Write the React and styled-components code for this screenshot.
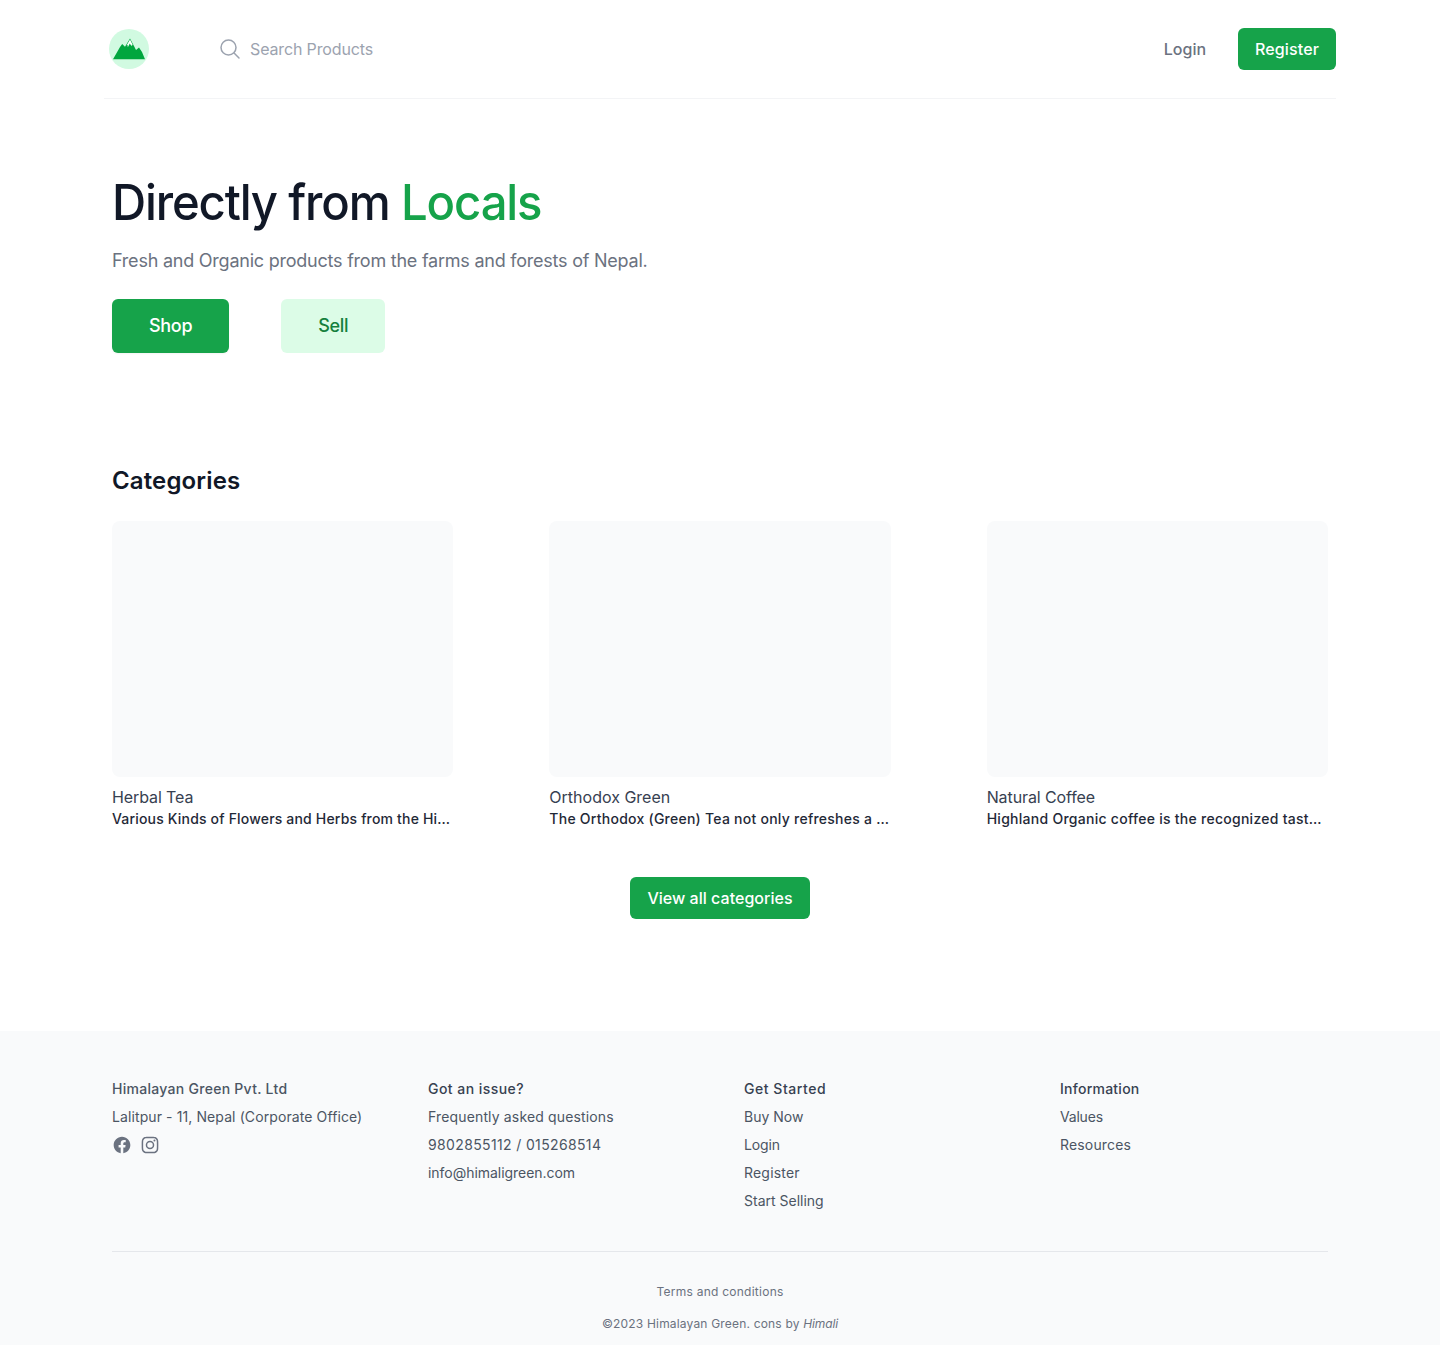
import React from "react";
import styled, { createGlobalStyle } from "styled-components";

const GlobalStyle = createGlobalStyle`
  *, *::before, *::after { box-sizing: border-box; }
  body {
    margin: 0;
    background: #fff;
    color: #111827;
    font-family: Inter, "Liberation Sans", sans-serif;
    font-size: 16px;
    line-height: 24px;
  }
  h1, h2, h3, p, ul { margin: 0; padding: 0; font-weight: inherit; font-size: inherit; }
  ul { list-style: none; }
  a { color: inherit; text-decoration: none; }
`;

const Page = styled.div`
  min-height: 1345px;
  display: flex;
  flex-direction: column;
`;

const Header = styled.header`
  width: 1232px;
  height: 99px;
  margin: 0 auto;
  display: flex;
  align-items: center;
  border-bottom: 1px solid #f3f4f6;
`;

const LogoLink = styled.a`
  display: flex;
  margin-left: 5px;
`;

const Search = styled.label`
  display: flex;
  flex: 1;
  align-items: center;
  gap: 8px;
  margin-left: 69px;
  color: #9ca3af;
`;

const SearchInput = styled.input`
  width: 320px;
  padding: 0;
  border: 0;
  outline: 0;
  background: transparent;
  font: inherit;
  letter-spacing: -0.14px;
  &::placeholder { color: #9ca3af; opacity: 1; }
`;

const LoginLink = styled.a`
  margin-right: 32px;
  font-weight: 500;
  color: #6b7280;
`;

const Button = styled.a`
  display: inline-flex;
  align-items: center;
  justify-content: center;
  height: ${(p) => (p.$large ? "54px" : "42px")};
  padding: 0 ${(p) => (p.$large ? "37px" : "17px")};
  border-radius: 6px;
  font-size: ${(p) => (p.$large ? "18px" : "16px")};
  font-weight: 500;
  letter-spacing: ${(p) => p.$track || 0}px;
  white-space: nowrap;
  color: ${(p) => (p.$soft ? "#15803d" : "#fff")};
  background: ${(p) => (p.$soft ? "#dcfce7" : "#16a34a")};
  box-shadow: ${(p) => (p.$raised ? "0 1px 2px rgba(0, 0, 0, 0.05)" : "none")};
`;

const Main = styled.main`
  width: 1216px;
  margin: 0 auto;
`;

const Hero = styled.section`
  padding-top: 80px;
`;

const Headline = styled.h1`
  font-size: 49.5px;
  line-height: 46px;
  font-weight: 500;
  letter-spacing: -1.2px;
  transform: scaleX(0.955);
  transform-origin: left;
`;

const Accent = styled.span`
  color: #16a34a;
`;

const Lead = styled.p`
  margin-top: 22px;
  font-size: 18px;
  line-height: 28px;
  letter-spacing: -0.23px;
  color: #6b7280;
`;

const Actions = styled.div`
  display: flex;
  gap: 52px;
  margin-top: 24px;
`;

const Categories = styled.section`
  margin-top: 112px;
`;

const SectionTitle = styled.h2`
  font-size: 24px;
  line-height: 32px;
  font-weight: 600;
  letter-spacing: 0.14px;
`;

const CardGrid = styled.div`
  display: grid;
  grid-template-columns: repeat(3, minmax(0, 1fr));
  column-gap: 96px;
  margin-top: 24px;
`;

const CardImage = styled.div`
  height: 256px;
  border-radius: 8px;
  background: #f9fafb;
`;

const CardTitle = styled.h3`
  margin-top: 8px;
  letter-spacing: ${(p) => p.$track}px;
  color: #374151;
`;

const CardText = styled.p`
  white-space: nowrap;
  font-size: 14px;
  line-height: 20px;
  font-weight: 500;
  letter-spacing: ${(p) => p.$track}px;
  color: #1f2937;
`;

const ViewAll = styled.div`
  display: flex;
  justify-content: center;
  margin: 48px 0 112px;
`;

const Footer = styled.footer`
  flex: 1;
  background: #f9fafb;
`;

const FooterInner = styled.div`
  width: 1216px;
  margin: 0 auto;
  padding-top: 48px;
`;

const FooterColumns = styled.div`
  display: grid;
  grid-template-columns: repeat(4, minmax(0, 1fr));
  column-gap: 48px;
  height: 173px;
  align-items: start;
  border-bottom: 1px solid #e5e7eb;
`;

const FooterList = styled.ul`
  display: flex;
  flex-direction: column;
  gap: 8px;
  font-size: 14px;
  line-height: 20px;
  color: #4b5563;
`;

const FooterHeading = styled.li`
  font-weight: 500;
  letter-spacing: ${(p) => p.$track}px;
  color: ${(p) => (p.$muted ? "#4b5563" : "#374151")};
`;

const FooterItem = styled.li`
  letter-spacing: ${(p) => p.$track}px;
`;

const Social = styled.li`
  display: flex;
  gap: 8px;
  color: #6b7280;
`;

const Legal = styled.div`
  display: flex;
  flex-direction: column;
  align-items: center;
  gap: 16px;
  padding-top: 32px;
  font-size: 12px;
  line-height: 16px;
  color: #6b7280;
`;

const LegalLine = styled.p`
  letter-spacing: ${(p) => p.$track}px;
  em { letter-spacing: -0.1px; }
`;

const Logo = () => (
  <svg width="40" height="40" viewBox="0 0 40 40">
    <circle cx="20" cy="20" r="20" fill="#d1fae1" />
    <path d="M4 30.3 11 18 13.2 15 16 17.8 21 9.5 25.5 18 27 21 30 18.5 33 23 36 30.3Z" fill="#00a63e" />
    <path d="M21 10.5 17.5 16.5 18.5 15.8 18.8 18.2 20.8 14.5 22.5 17.2 23 15.5 24.2 16.8Z" fill="#fff" />
  </svg>
);

const SearchIcon = () => (
  <svg width="24" height="24" viewBox="0 0 24 24" fill="none" stroke="currentColor" strokeWidth="1.5" strokeLinecap="round" strokeLinejoin="round">
    <path d="m21 21-5.197-5.197m0 0A7.5 7.5 0 1 0 5.196 5.196a7.5 7.5 0 0 0 10.607 10.607Z" />
  </svg>
);

const Facebook = () => (
  <svg width="20" height="20" viewBox="0 0 24 24" fill="currentColor">
    <path d="M22 12c0-5.523-4.477-10-10-10S2 6.477 2 12c0 4.991 3.657 9.128 8.438 9.878v-6.987h-2.54V12h2.54V9.797c0-2.506 1.492-3.89 3.777-3.89 1.094 0 2.238.195 2.238.195v2.46h-1.26c-1.243 0-1.63.771-1.63 1.562V12h2.773l-.443 2.89h-2.33v6.988C18.343 21.128 22 16.991 22 12z" />
  </svg>
);

const Instagram = () => (
  <svg width="20" height="20" viewBox="0 0 24 24" fill="currentColor">
    <path fillRule="evenodd" clipRule="evenodd" d="M12.315 2c2.43 0 2.784.013 3.808.06 1.064.049 1.791.218 2.427.465a4.902 4.902 0 011.772 1.153 4.902 4.902 0 011.153 1.772c.247.636.416 1.363.465 2.427.048 1.067.06 1.407.06 4.123v.08c0 2.643-.012 2.987-.06 4.043-.049 1.064-.218 1.791-.465 2.427a4.902 4.902 0 01-1.153 1.772 4.902 4.902 0 01-1.772 1.153c-.636.247-1.363.416-2.427.465-1.067.048-1.407.06-4.123.06h-.08c-2.643 0-2.987-.012-4.043-.06-1.064-.049-1.791-.218-2.427-.465a4.902 4.902 0 01-1.772-1.153 4.902 4.902 0 01-1.153-1.772c-.247-.636-.416-1.363-.465-2.427-.047-1.024-.06-1.379-.06-3.808v-.63c0-2.43.013-2.784.06-3.808.049-1.064.218-1.791.465-2.427a4.902 4.902 0 011.153-1.772A4.902 4.902 0 015.45 2.525c.636-.247 1.363-.416 2.427-.465C8.901 2.013 9.256 2 11.685 2h.63zm-.081 1.802h-.468c-2.456 0-2.784.011-3.807.058-.975.045-1.504.207-1.857.344-.467.182-.8.398-1.15.748-.35.35-.566.683-.748 1.15-.137.353-.3.882-.344 1.857-.047 1.023-.058 1.351-.058 3.807v.468c0 2.456.011 2.784.058 3.807.045.975.207 1.504.344 1.857.182.466.399.8.748 1.15.35.35.683.566 1.15.748.353.137.882.3 1.857.344 1.054.048 1.37.058 4.041.058h.08c2.597 0 2.917-.01 3.96-.058.976-.045 1.505-.207 1.858-.344.466-.182.8-.398 1.15-.748.35-.35.566-.683.748-1.15.137-.353.3-.882.344-1.857.048-1.055.058-1.37.058-4.041v-.08c0-2.597-.01-2.917-.058-3.96-.045-.976-.207-1.505-.344-1.858a3.097 3.097 0 00-.748-1.15 3.098 3.098 0 00-1.15-.748c-.353-.137-.882-.3-1.857-.344-1.023-.047-1.351-.058-3.807-.058zM12 6.865a5.135 5.135 0 110 10.27 5.135 5.135 0 010-10.27zm0 1.802a3.333 3.333 0 100 6.666 3.333 3.333 0 000-6.666zm5.338-3.205a1.2 1.2 0 110 2.4 1.2 1.2 0 010-2.4z" />
  </svg>
);

const categories = [
  { name: "Herbal Tea", track: -0.1, text: "Various Kinds of Flowers and Herbs from the Hi…", textTrack: 0.18 },
  { name: "Orthodox Green", track: 0, text: "The Orthodox (Green) Tea not only refreshes a …", textTrack: 0.25 },
  { name: "Natural Coffee", track: -0.1, text: "Highland Organic coffee is the recognized tast…", textTrack: 0.27 },
];

const footerGroups = [
  {
    title: "Got an issue?",
    track: 0.46,
    links: [["Frequently asked questions", 0.15], ["9802855112 / 015268514", 0.36], ["info@himaligreen.com", -0.04]],
  },
  {
    title: "Get Started",
    track: 0.54,
    links: [["Buy Now", 0], ["Login", -0.15], ["Register", 0.2], ["Start Selling", 0]],
  },
  {
    title: "Information",
    track: 0.25,
    links: [["Values", -0.2], ["Resources", 0.16]],
  },
];

export default function App() {
  return (
    <>
      <GlobalStyle />
      <Page>
        <Header>
          <LogoLink href="#"><Logo /></LogoLink>
          <Search>
            <SearchIcon />
            <SearchInput placeholder="Search Products" />
          </Search>
          <LoginLink href="#">Login</LoginLink>
          <Button href="#" $track={0.12}>Register</Button>
        </Header>
        <Main>
          <Hero>
            <Headline>Directly from <Accent>Locals</Accent></Headline>
            <Lead>Fresh and Organic products from the farms and forests of Nepal.</Lead>
            <Actions>
              <Button href="#" $large $raised $track={-0.3}>Shop</Button>
              <Button href="#" $large $soft $track={-0.35}>Sell</Button>
            </Actions>
          </Hero>
          <Categories>
            <SectionTitle>Categories</SectionTitle>
            <CardGrid>
              {categories.map((c) => (
                <article key={c.name}>
                  <CardImage />
                  <CardTitle $track={c.track}>{c.name}</CardTitle>
                  <CardText $track={c.textTrack}>{c.text}</CardText>
                </article>
              ))}
            </CardGrid>
            <ViewAll><Button href="#" $track={0.03}>View all categories</Button></ViewAll>
          </Categories>
        </Main>
        <Footer>
          <FooterInner>
            <FooterColumns>
              <FooterList>
                <FooterHeading $muted $track={0.28}>Himalayan Green Pvt. Ltd</FooterHeading>
                <FooterItem $track={0.1}>Lalitpur - 11, Nepal (Corporate Office)</FooterItem>
                <Social><Facebook /><Instagram /></Social>
              </FooterList>
              {footerGroups.map((g) => (
                <FooterList key={g.title}>
                  <FooterHeading $track={g.track}>{g.title}</FooterHeading>
                  {g.links.map(([label, track]) => (
                    <FooterItem key={label} $track={track}><a href="#">{label}</a></FooterItem>
                  ))}
                </FooterList>
              ))}
            </FooterColumns>
            <Legal>
              <LegalLine $track={0.25}><a href="#">Terms and conditions</a></LegalLine>
              <LegalLine $track={0.18}>©2023 Himalayan Green. cons by <em>Himali</em></LegalLine>
            </Legal>
          </FooterInner>
        </Footer>
      </Page>
    </>
  );
}
